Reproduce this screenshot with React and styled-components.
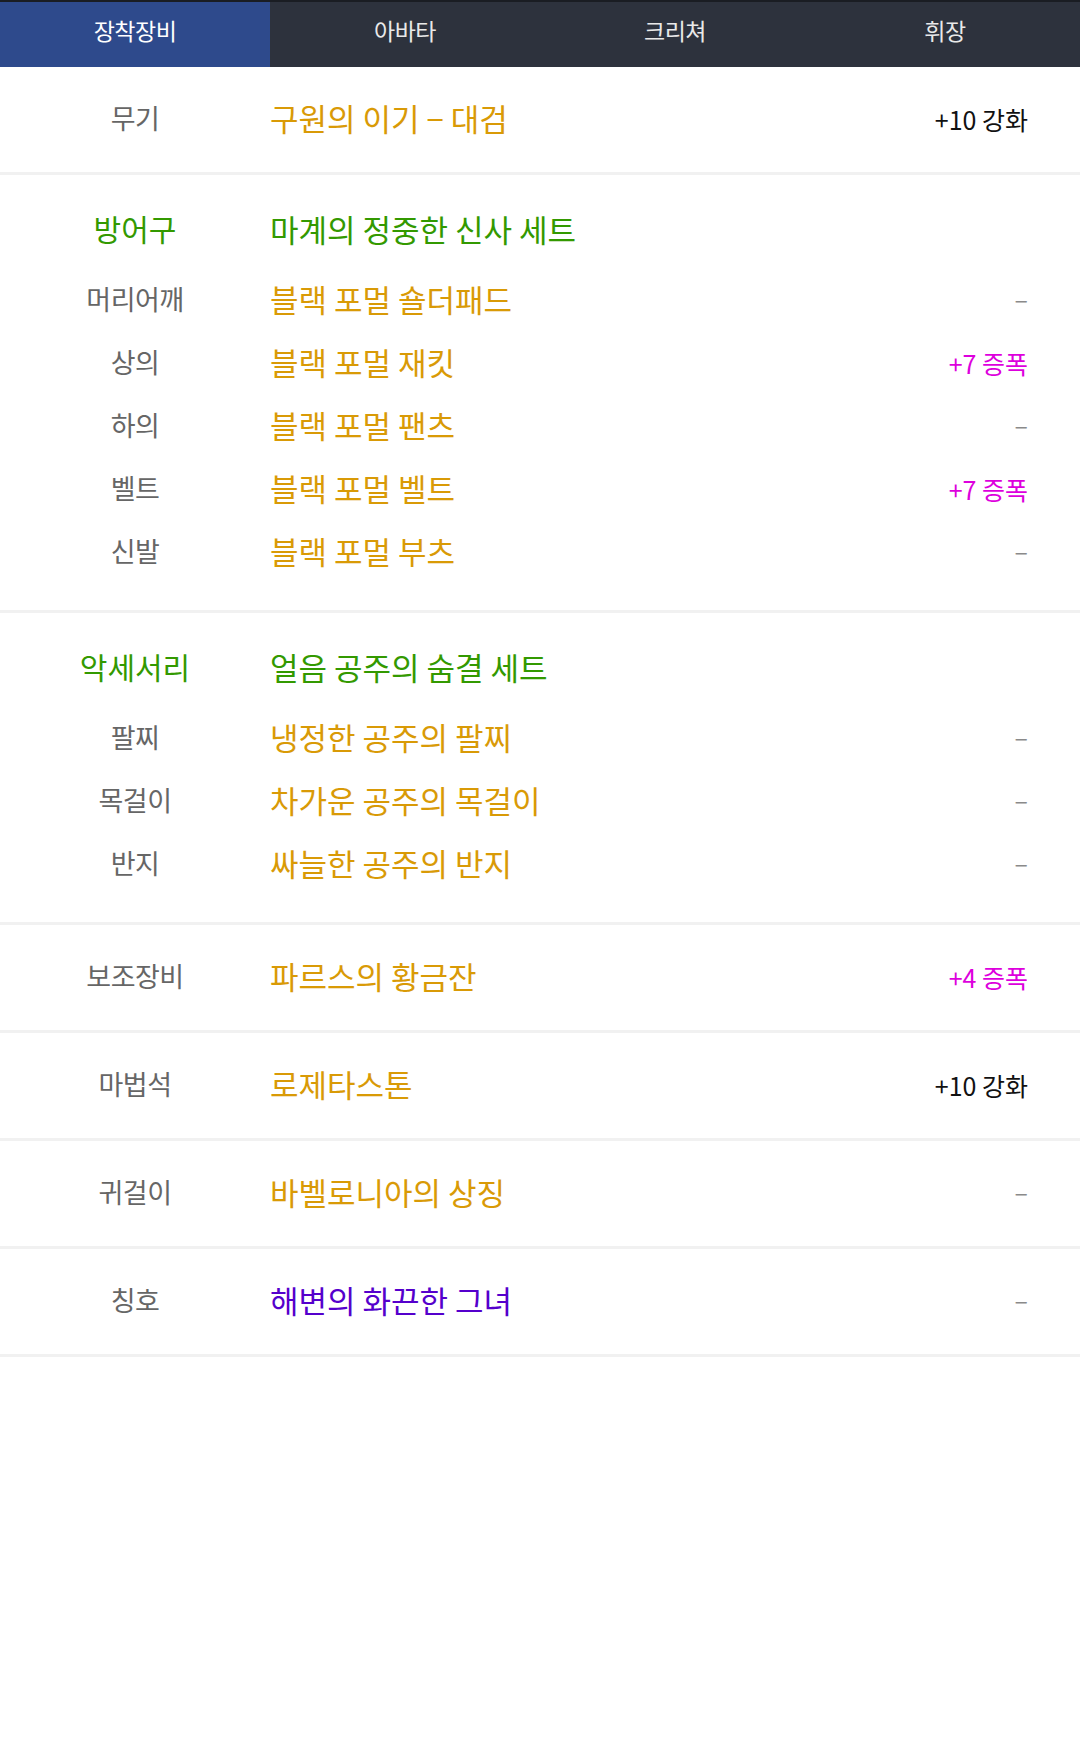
import styled, { createGlobalStyle } from "styled-components";

const GlobalStyle = createGlobalStyle`
  body {
    margin: 0;
    background: #ffffff;
    font-family: "Noto Sans CJK KR", "Noto Sans", sans-serif;
  }
`;

const Page = styled.div`
  width: 1080px;
  min-height: 1749px;
  background: #ffffff;
`;

const TopStrip = styled.div`
  height: 2px;
  background: #1a1d23;
`;

const Tabs = styled.nav`
  display: grid;
  grid-template-columns: repeat(4, 1fr);
  height: 65px;
  background: #2d323d;
`;

const Tab = styled.div`
  display: flex;
  align-items: center;
  justify-content: center;
  padding-bottom: 9px;
  box-sizing: border-box;
  font-size: 23px;
  letter-spacing: -0.5px;
  color: ${({ active }) => (active ? "#ffffff" : "#e9e9e9")};
  background: ${({ active }) => (active ? "#2e4a8c" : "transparent")};
`;

const Section = styled.section`
  border-bottom: 3px solid #f1f1f1;
  padding: ${({ group }) => (group ? "28px 0" : "0")};
`;

const Row = styled.div`
  display: grid;
  grid-template-columns: 270px 1fr auto;
  align-items: center;
  box-sizing: border-box;
  padding-right: 52px;
  padding-bottom: ${({ lift }) => lift || 0}px;
  height: ${({ h }) => h}px;
  margin-bottom: ${({ mb }) => mb || 0}px;
`;

const Label = styled.div`
  text-align: center;
  font-size: 27px;
  letter-spacing: -0.5px;
  color: #666666;
  line-height: 1;
`;

const GroupLabel = styled(Label)`
  font-size: 30px;
  letter-spacing: 0;
  color: #339900;
`;

const Name = styled.div`
  font-size: 31px;
  letter-spacing: 0;
  line-height: 1;
  color: ${({ tone }) =>
    tone === "set" ? "#339900" : tone === "title" ? "#5500cc" : "#d99a06"};
`;

const Value = styled.div`
  font-size: 25px;
  line-height: 1;
  text-align: right;
  padding-top: ${({ kind }) => (kind === "none" ? 0 : 4)}px;
  color: ${({ kind }) =>
    kind === "amp" ? "#dd00dd" : kind === "none" ? "#8a8a8a" : "#111111"};
`;

const tabs = ["장착장비", "아바타", "크리쳐", "휘장"];

const armor = [
  ["머리어깨", "블랙 포멀 숄더패드", null],
  ["상의", "블랙 포멀 재킷", "+7 증폭"],
  ["하의", "블랙 포멀 팬츠", null],
  ["벨트", "블랙 포멀 벨트", "+7 증폭"],
  ["신발", "블랙 포멀 부츠", null],
];

const accessories = [
  ["팔찌", "냉정한 공주의 팔찌", null],
  ["목걸이", "차가운 공주의 목걸이", null],
  ["반지", "싸늘한 공주의 반지", null],
];

const singles = [
  ["보조장비", "파르스의 황금잔", "+4 증폭"],
  ["마법석", "로제타스톤", "+10 강화"],
  ["귀걸이", "바벨로니아의 상징", null],
  ["칭호", "해변의 화끈한 그녀", null, "title"],
];

function ValueCell({ text }) {
  if (!text) return <Value kind="none">–</Value>;
  return <Value kind={text.includes("증폭") ? "amp" : "enhance"}>{text}</Value>;
}

function Group({ title, setName, items }) {
  return (
    <Section group>
      <Row h={50} mb={14}>
        <GroupLabel>{title}</GroupLabel>
        <Name tone="set">{setName}</Name>
        <span />
      </Row>
      {items.map(([label, name, value]) => (
        <Row h={63} key={label}>
          <Label>{label}</Label>
          <Name>{name}</Name>
          <ValueCell text={value} />
        </Row>
      ))}
    </Section>
  );
}

export default function App() {
  return (
    <Page>
      <GlobalStyle />
      <TopStrip />
      <Tabs>
        {tabs.map((t, i) => (
          <Tab key={t} active={i === 0}>
            {t}
          </Tab>
        ))}
      </Tabs>

      <Section>
        <Row h={105} lift={4}>
          <Label>무기</Label>
          <Name>구원의 이기 − 대검</Name>
          <ValueCell text="+10 강화" />
        </Row>
      </Section>

      <Group title="방어구" setName="마계의 정중한 신사 세트" items={armor} />
      <Group title="악세서리" setName="얼음 공주의 숨결 세트" items={accessories} />

      {singles.map(([label, name, value, tone]) => (
        <Section key={label}>
          <Row h={105} lift={5}>
            <Label>{label}</Label>
            <Name tone={tone}>{name}</Name>
            <ValueCell text={value} />
          </Row>
        </Section>
      ))}
    </Page>
  );
}
